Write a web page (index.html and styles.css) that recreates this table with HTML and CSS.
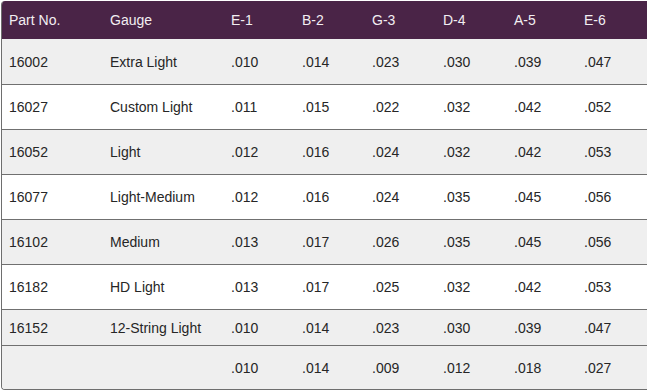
FILE: index.html
```html
<!DOCTYPE html>
<html>
<head>
<meta charset="utf-8">
<link rel="stylesheet" href="styles.css">
</head>
<body>
<div class="table">
  <div class="row head">
    <div class="c">Part No.</div><div class="c">Gauge</div><div class="c">E-1</div><div class="c">B-2</div><div class="c">G-3</div><div class="c">D-4</div><div class="c">A-5</div><div class="c">E-6</div>
  </div>
  <div class="row alt first">
    <div class="c">16002</div><div class="c">Extra Light</div><div class="c">.010</div><div class="c">.014</div><div class="c">.023</div><div class="c">.030</div><div class="c">.039</div><div class="c">.047</div>
  </div>
  <div class="row">
    <div class="c">16027</div><div class="c">Custom Light</div><div class="c">.011</div><div class="c">.015</div><div class="c">.022</div><div class="c">.032</div><div class="c">.042</div><div class="c">.052</div>
  </div>
  <div class="row alt">
    <div class="c">16052</div><div class="c">Light</div><div class="c">.012</div><div class="c">.016</div><div class="c">.024</div><div class="c">.032</div><div class="c">.042</div><div class="c">.053</div>
  </div>
  <div class="row">
    <div class="c">16077</div><div class="c">Light-Medium</div><div class="c">.012</div><div class="c">.016</div><div class="c">.024</div><div class="c">.035</div><div class="c">.045</div><div class="c">.056</div>
  </div>
  <div class="row alt">
    <div class="c">16102</div><div class="c">Medium</div><div class="c">.013</div><div class="c">.017</div><div class="c">.026</div><div class="c">.035</div><div class="c">.045</div><div class="c">.056</div>
  </div>
  <div class="row">
    <div class="c">16182</div><div class="c">HD Light</div><div class="c">.013</div><div class="c">.017</div><div class="c">.025</div><div class="c">.032</div><div class="c">.042</div><div class="c">.053</div>
  </div>
  <div class="row alt short">
    <div class="c">16152</div><div class="c">12-String Light</div><div class="c">.010</div><div class="c">.014</div><div class="c">.023</div><div class="c">.030</div><div class="c">.039</div><div class="c">.047</div>
  </div>
  <div class="row alt last">
    <div class="c"></div><div class="c"></div><div class="c">.010</div><div class="c">.014</div><div class="c">.009</div><div class="c">.012</div><div class="c">.018</div><div class="c">.027</div>
  </div>
</div>
</body>
</html>
```

FILE: styles.css
```css
html, body {
  margin: 0;
  padding: 0;
  background: #ffffff;
  overflow: hidden;
}
.table {
  margin: 1px 0 0 1px;
  width: 645px;
  border-left: 1px solid #6e6e6e;
  border-bottom: 1px solid #6e6e6e;
  border-radius: 4px 0 0 4px;
  overflow: hidden;
  font-family: "Liberation Sans", Arial, sans-serif;
  font-size: 14px;
  color: #262626;
}
.row {
  display: grid;
  grid-template-columns: 101px 121px 71px 70px 71px 71px 70px 70px;
  height: 44px;
  border-top: 1px solid #707070;
  background: #ffffff;
}
.row.alt {
  background: #efefef;
}
.row.head {
  height: 38px;
  border-top: none;
  background: #4a2447;
  color: #f2eef2;
}
.row.first {
  height: 45px;
  border-top: none;
}
.row.short {
  height: 35px;
}
.row.last {
  height: 43px;
}
.c {
  display: flex;
  align-items: center;
  padding-left: 7px;
  white-space: nowrap;
}
```
